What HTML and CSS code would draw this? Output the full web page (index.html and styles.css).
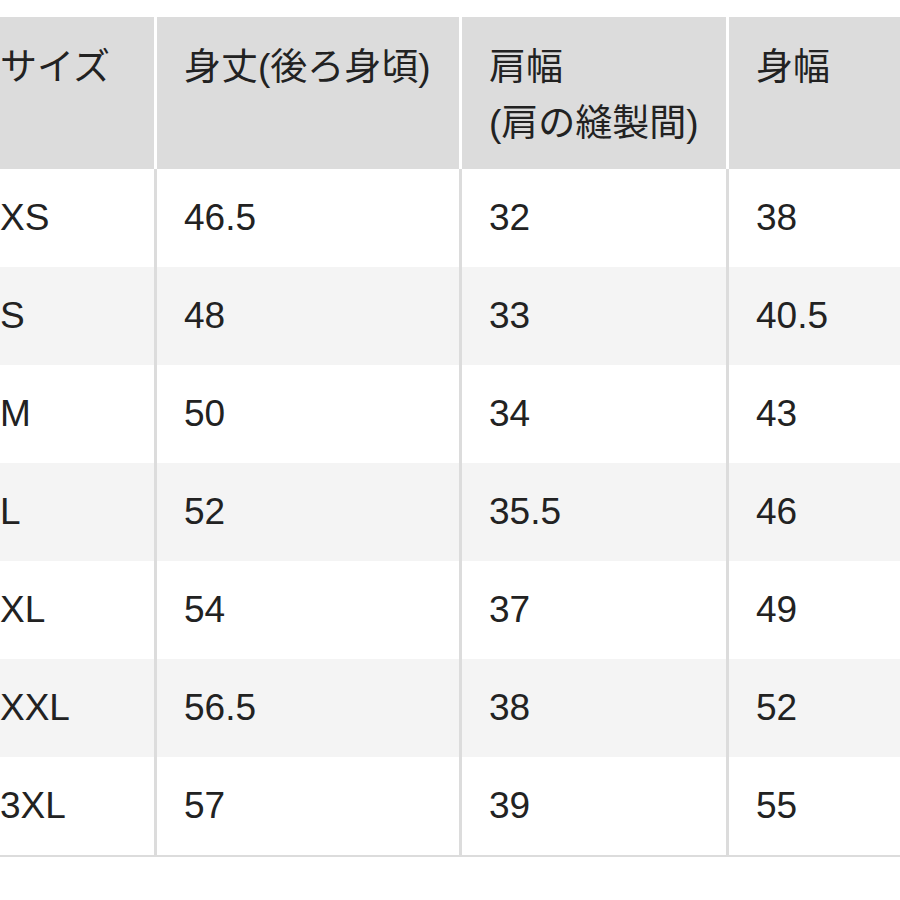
FILE: index.html
```html
<!DOCTYPE html>
<html lang="ja">
<head>
<meta charset="utf-8">
<title>サイズ表</title>
<link rel="stylesheet" href="styles.css">
</head>
<body>
<div class="page">
  <div class="size-table">
    <div class="cell head first">サイズ</div>
    <div class="cell head">身丈(後ろ身頃)</div>
    <div class="cell head">肩幅<br>(肩の縫製間)</div>
    <div class="cell head">身幅</div>

    <div class="cell first">XS</div><div class="cell">46.5</div><div class="cell">32</div><div class="cell">38</div>
    <div class="cell alt first">S</div><div class="cell alt">48</div><div class="cell alt">33</div><div class="cell alt">40.5</div>
    <div class="cell first">M</div><div class="cell">50</div><div class="cell">34</div><div class="cell">43</div>
    <div class="cell alt first">L</div><div class="cell alt">52</div><div class="cell alt">35.5</div><div class="cell alt">46</div>
    <div class="cell first">XL</div><div class="cell">54</div><div class="cell">37</div><div class="cell">49</div>
    <div class="cell alt first">XXL</div><div class="cell alt">56.5</div><div class="cell alt">38</div><div class="cell alt">52</div>
    <div class="cell first last">3XL</div><div class="cell last">57</div><div class="cell last">39</div><div class="cell last">55</div>
  </div>
</div>
</body>
</html>
```

FILE: styles.css
```css
html, body {
  margin: 0;
  padding: 0;
  background: #ffffff;
  overflow: hidden;
}

.page {
  width: 900px;
  height: 900px;
  padding-top: 17px;
  box-sizing: border-box;
  overflow: hidden;
}

.size-table {
  display: grid;
  grid-template-columns: 182px 305px 267px 300px;
  grid-template-rows: 152px repeat(7, 98px);
  margin-left: -28px;
  width: 1054px;
  border-bottom: 2px solid #dcdcdc;
  font-family: "Liberation Sans", "Noto Sans CJK JP", sans-serif;
  font-size: 37px;
  color: #222222;
}

.cell {
  display: flex;
  align-items: center;
  padding: 0 26px 0 27px;
  border-left: 3px solid #dcdcdc;
  background: #ffffff;
  line-height: 56px;
  white-space: nowrap;
}

.cell.first {
  border-left: none;
  padding-left: 28px;
}

.cell.head {
  display: block;
  padding-top: 23px;
  background: #dcdcdc;
  border-left-color: #ffffff;
}

.cell.alt {
  background: #f4f4f4;
}
```
